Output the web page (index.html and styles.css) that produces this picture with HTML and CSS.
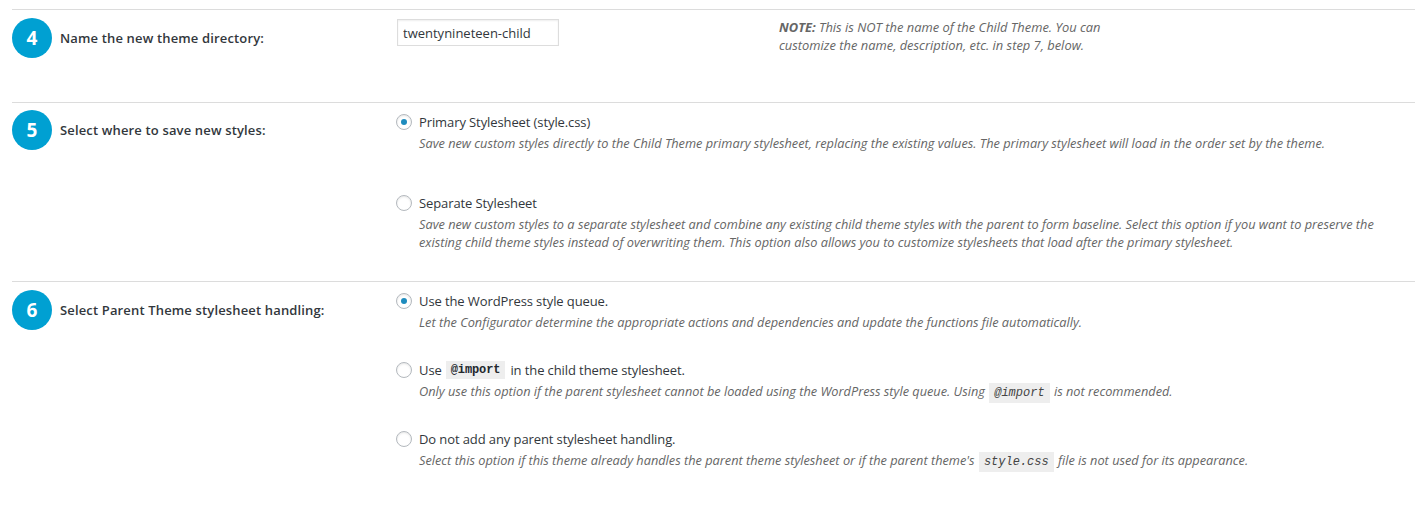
FILE: index.html
```html
<!DOCTYPE html>
<html>
<head>
<meta charset="utf-8">
<link rel="stylesheet" href="styles.css">
</head>
<body>
<div class="page">
  <div class="row row-dir">
    <div class="step"><span class="num">4</span><span class="step-label">Name the new theme directory:</span></div>
    <div class="field"><input class="text-input" type="text" value="twentynineteen-child"></div>
    <div class="note"><strong>NOTE:</strong> This is NOT the name of the Child Theme. You can<br>customize the name, description, etc. in step 7, below.</div>
  </div>

  <div class="row row-save">
    <div class="step"><span class="num">5</span><span class="step-label">Select where to save new styles:</span></div>
    <div class="options">
      <div class="option">
        <label class="opt-label"><span class="radio checked"></span>Primary Stylesheet (style.css)</label>
        <p class="desc">Save new custom styles directly to the Child Theme primary stylesheet, replacing the existing values. The primary stylesheet will load in the order set by the theme.</p>
      </div>
      <div class="option">
        <label class="opt-label"><span class="radio"></span>Separate Stylesheet</label>
        <p class="desc">Save new custom styles to a separate stylesheet and combine any existing child theme styles with the parent to form baseline. Select this option if you want to preserve the<br>existing child theme styles instead of overwriting them. This option also allows you to customize stylesheets that load after the primary stylesheet.</p>
      </div>
    </div>
  </div>

  <div class="row row-parent">
    <div class="step"><span class="num">6</span><span class="step-label">Select Parent Theme stylesheet handling:</span></div>
    <div class="options">
      <div class="option">
        <label class="opt-label"><span class="radio checked"></span>Use the WordPress style queue.</label>
        <p class="desc">Let the Configurator determine the appropriate actions and dependencies and update the functions file automatically.</p>
      </div>
      <div class="option">
        <label class="opt-label"><span class="radio"></span>Use <code class="code-strong">@import</code> in the child theme stylesheet.</label>
        <p class="desc">Only use this option if the parent stylesheet cannot be loaded using the WordPress style queue. Using <code>@import</code> is not recommended.</p>
      </div>
      <div class="option">
        <label class="opt-label"><span class="radio"></span>Do not add any parent stylesheet handling.</label>
        <p class="desc">Select this option if this theme already handles the parent theme stylesheet or if the parent theme's <code>style.css</code> file is not used for its appearance.</p>
      </div>
    </div>
  </div>
</div>
</body>
</html>
```

FILE: styles.css
```css
html, body {
  margin: 0;
  padding: 0;
  background: #ffffff;
}

body {
  font-family: "Open Sans", "Noto Sans", sans-serif;
  font-size: 13px;
  color: #23282d;
}

.page {
  padding: 9px 0 0 12px;
}

.row {
  display: grid;
  grid-template-columns: 385px 1fr;
  border-top: 1px solid #dcdcdc;
}

.row-dir {
  grid-template-columns: 385px 382px 1fr;
  height: 92px;
}

.row-save {
  height: 178px;
}

.step {
  display: flex;
  align-items: center;
  gap: 8px;
  height: 40px;
  margin-top: 8px;
}

.row-save .step {
  margin-top: 7px;
}

.num {
  width: 40px;
  height: 40px;
  border-radius: 50%;
  background: #00a0d2;
  color: #ffffff;
  font-weight: 700;
  font-size: 19px;
  display: flex;
  align-items: center;
  justify-content: center;
  flex: none;
}

.step-label {
  font-weight: 600;
  font-size: 13px;
  letter-spacing: 0.15px;
  color: #32373c;
}

.field {
  padding-top: 9px;
}

.text-input {
  box-sizing: border-box;
  width: 162px;
  height: 27px;
  margin: 0;
  padding: 0 5px;
  border: 1px solid #dddddd;
  box-shadow: inset 0 1px 2px rgba(0, 0, 0, 0.07);
  font-family: inherit;
  font-size: 13px;
  color: #32373c;
  background: #ffffff;
}

.note {
  padding-top: 8px;
  font-style: italic;
  font-size: 12.9px;
  line-height: 18px;
  color: #666666;
}

.note strong {
  font-weight: 700;
}

.options {
  padding-top: 9px;
}

.option {
  margin-bottom: 41px;
}

.row-parent .option {
  margin-bottom: 29px;
}

.opt-label {
  display: flex;
  align-items: center;
  height: 20px;
  margin-left: -1px;
  font-size: 13px;
  letter-spacing: -0.1px;
  color: #32373c;
}

.radio {
  box-sizing: border-box;
  width: 16px;
  height: 16px;
  border-radius: 50%;
  border: 1px solid #b4b9be;
  box-shadow: inset 0 1px 2px rgba(0, 0, 0, 0.1);
  background: #ffffff;
  margin-right: 7px;
  display: flex;
  align-items: center;
  justify-content: center;
  flex: none;
}

.radio.checked::after {
  content: "";
  width: 6px;
  height: 6px;
  border-radius: 50%;
  background: #1e8cbe;
}

.desc {
  margin: 2px 0 0 22px;
  font-style: italic;
  font-size: 12.75px;
  line-height: 18px;
  color: #666666;
}

code {
  font-family: "Liberation Mono", "DejaVu Sans Mono", monospace;
  font-size: 12px;
  line-height: 1;
  background: #eeeeee;
  padding: 3px 5px;
  margin: 0 1px;
  color: #444444;
}

.code-strong {
  font-weight: 700;
  font-style: normal;
  color: #23282d;
  margin: 0 5px 0 4px;
}
```
